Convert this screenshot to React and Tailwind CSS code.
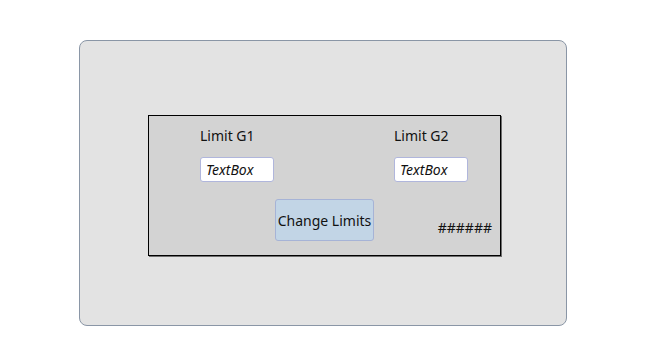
export default function App() {
  return (
    <div
      className="h-[364px] w-[645px] bg-white pl-[79px] pt-[40px]"
      style={{ fontFamily: '"Noto Sans", "Open Sans", sans-serif' }}
    >
      <div className="h-[286px] w-[488px] rounded-[8px] border border-[#8a96a6] bg-[#e3e3e3] pl-[68px] pt-[74px]">
        {/* limits panel */}
        <div className="flex h-[141px] w-[353px] flex-col border border-black bg-[#d3d3d3] shadow-[1px_1px_0_#6e6e6e]">
          <div className="flex pl-[51px] pt-[10px]">
            {["Limit G1", "Limit G2"].map((label, i) => (
              <div key={label} className={`flex shrink-0 flex-col ${i === 0 ? "w-[194px]" : "w-[90px]"}`}>
                <span className="text-[14px] leading-[20px] text-[#111]">{label}</span>
                <input
                  readOnly
                  value="TextBox"
                  className="mt-[11px] h-[25px] w-[74px] rounded-[3px] border border-[#b0b6dc] bg-white px-[5px] text-[14px] italic text-[#111] outline-none"
                />
              </div>
            ))}
          </div>
          <div className="flex items-end pl-[126px] pt-[17px]">
            <button className="h-[42px] w-[99px] rounded-[3px] border border-[#a6b3d6] bg-[#c2d5e6] text-[14px] text-[#111]">
              Change Limits
            </button>
            <span className="mb-[4px] ml-auto mr-[8px] text-[14px] leading-[18px] text-[#111]">
              ######
            </span>
          </div>
        </div>
      </div>
    </div>
  );
}
